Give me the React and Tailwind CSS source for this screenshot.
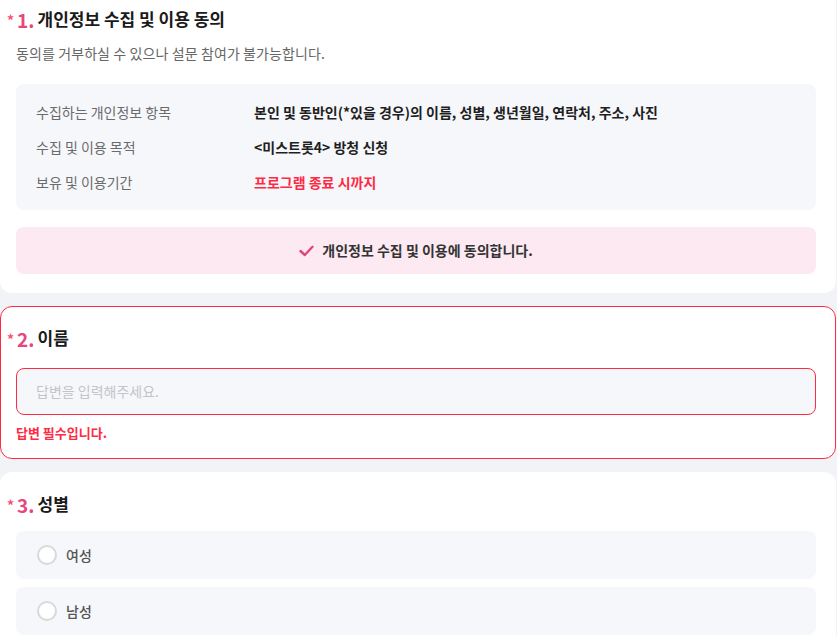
import React from "react";

const font = { fontFamily: '"Noto Sans CJK KR", "Noto Sans", sans-serif' };

function Title({ num, text }) {
  return (
    <div className="flex items-center -ml-[9px] h-[24px]">
      <span className="text-[#ff4f6e] text-[14px] font-bold leading-none mr-[3px] mt-[2px]">*</span>
      <span className="text-[#e8467c] text-[19px] font-bold leading-none mr-[3px]">{num}.</span>
      <span className="text-[#1a1a1a] text-[17px] font-bold leading-[24px]">{text}</span>
    </div>
  );
}

function Row({ label, value, red }) {
  return (
    <div className="flex items-center h-[20px]">
      <div className="w-[218px] text-[14px] text-[#6b6b6b]">{label}</div>
      <div className={"text-[14px] font-bold " + (red ? "text-[#ff2a44]" : "text-[#1f1f1f]")}>{value}</div>
    </div>
  );
}

function Option({ label }) {
  return (
    <div className="h-[48px] rounded-[8px] bg-[#f6f7fb] flex items-center pl-[21px]">
      <div className="w-[20px] h-[20px] rounded-full border-[2px] border-[#d9d9dc] bg-white"></div>
      <span className="ml-[9px] text-[14px] font-medium text-[#555]">{label}</span>
    </div>
  );
}

export default function App() {
  return (
    <div style={font} className="w-[837px] h-[636px] overflow-hidden bg-[#f2f3f7]">
      <div className="w-[836px] flex flex-col gap-[13px]">
        {/* Card 1 */}
        <div className="bg-white rounded-b-[12px] pt-[7px] pb-[19px] pl-[16px] pr-[20px]">
          <Title num="1" text="개인정보 수집 및 이용 동의" />
          <div className="mt-[12px] text-[14px] leading-[20px] text-[#666] tracking-[0.1px]">
            동의를 거부하실 수 있으나 설문 참여가 불가능합니다.
          </div>
          <div className="mt-[21px] rounded-[8px] bg-[#f6f7fb] px-[20px] py-[18px] flex flex-col gap-[15px]">
            <Row label="수집하는 개인정보 항목" value="본인 및 동반인(*있을 경우)의 이름, 성별, 생년월일, 연락처, 주소, 사진" />
            <Row label="수집 및 이용 목적" value="<미스트롯4> 방청 신청" />
            <Row label="보유 및 이용기간" value="프로그램 종료 시까지" red />
          </div>
          <div className="mt-[17px] h-[47px] rounded-[8px] bg-[#fce9f1] flex items-center justify-center">
            <svg width="15" height="12" viewBox="0 0 15 12" fill="none" className="mr-[8px]">
              <path d="M1.5 6L5.8 10L13.5 1.8" stroke="#e0457b" strokeWidth="2.4" strokeLinecap="round" strokeLinejoin="round" />
            </svg>
            <span className="text-[14px] font-bold text-[#333]">개인정보 수집 및 이용에 동의합니다.</span>
          </div>
        </div>

        {/* Card 2 */}
        <div className="bg-white rounded-[12px] border border-[#ff2a44] pt-[19px] pb-[16px] pl-[15px] pr-[19px]">
          <Title num="2" text="이름" />
          <div className="mt-[18px] h-[47px] rounded-[8px] border border-[#ff2a44] bg-[#f6f7fb] flex items-center px-[19px]">
            <span className="text-[14px] text-[#c4c4c8]">답변을 입력해주세요.</span>
          </div>
          <div className="mt-[9px] text-[13px] leading-[18px] font-bold text-[#ff2a44]">답변 필수입니다.</div>
        </div>

        {/* Card 3 */}
        <div className="bg-white rounded-[12px] pt-[20px] pb-[16px] pl-[16px] pr-[20px]">
          <Title num="3" text="성별" />
          <div className="mt-[15px] flex flex-col gap-[8px]">
            <Option label="여성" />
            <Option label="남성" />
          </div>
        </div>
      </div>
    </div>
  );
}
